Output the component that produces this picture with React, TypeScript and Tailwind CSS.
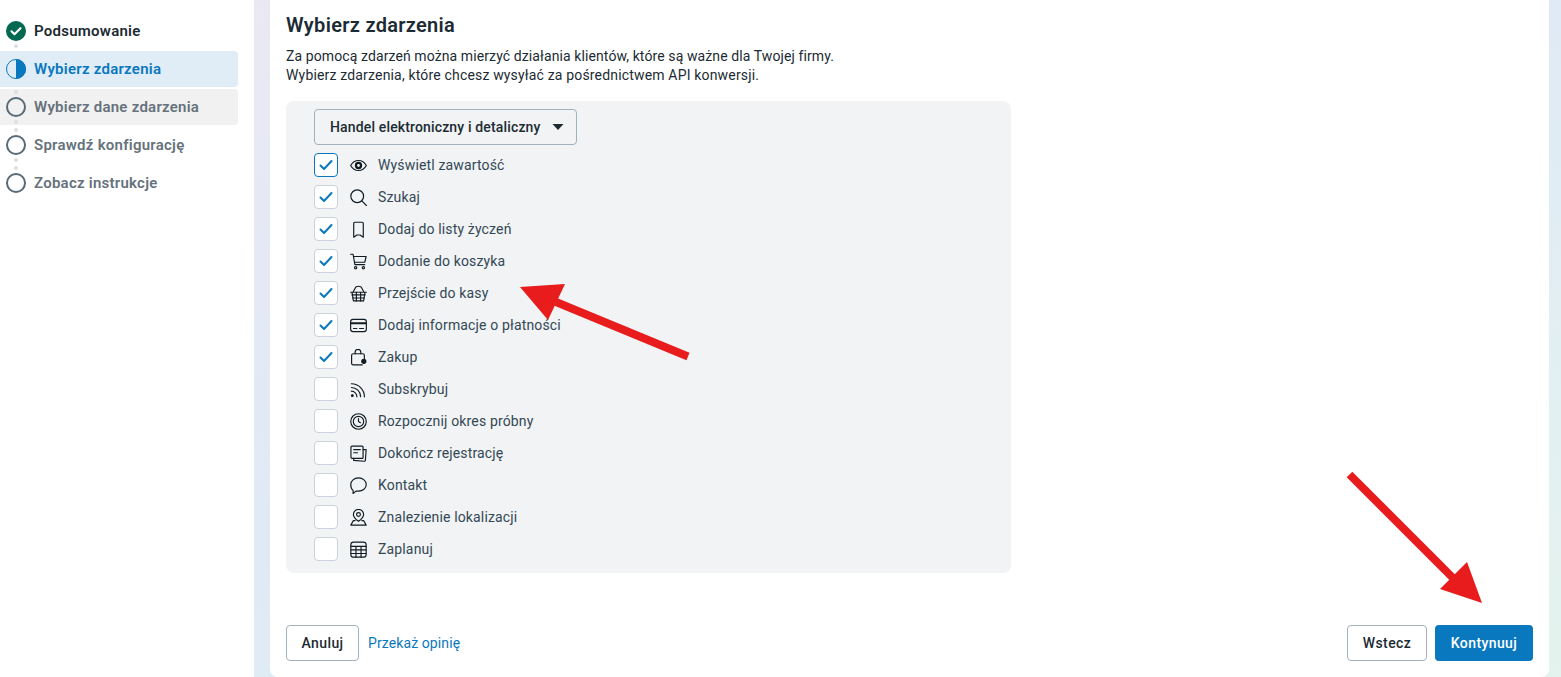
import type { ReactNode } from "react";

const font = { fontFamily: '"Roboto", "Liberation Sans", sans-serif' };

function Ic({ children }: { children: ReactNode }) {
  return (
    <svg viewBox="0 0 16 16" width="17" height="17" className="shrink-0" fill="none" stroke="#111b21" strokeWidth="1.1" strokeLinecap="round" strokeLinejoin="round">
      {children}
    </svg>
  );
}

const icons: Record<string, ReactNode> = {
  eye: (
    <Ic>
      <path d="M.6 8C2.400 4.800 5 3.300 8 3.300s5.600 1.500 7.400 4.700c-1.800 3.200-4.400 4.700-7.400 4.700S2.400 11.200.6 8Z" />
      <circle cx="8" cy="8" r="2.900" fill="#111b21" />
      <circle cx="8" cy="8" r="1.300" fill="#f1f3f5" stroke="none" />
    </Ic>
  ),
  search: (
    <Ic>
      <circle cx="6.800" cy="6.800" r="6" />
      <path d="m11.100 11.100 4.400 4.400" />
    </Ic>
  ),
  bookmark: (
    <Ic>
      <path d="M3.500 2.200a1 1 0 0 1 1-1h7a1 1 0 0 1 1 1v13L9.500 13.200h-3L3.500 15.200z" />
    </Ic>
  ),
  cart: (
    <Ic>
      <path d="M.6 1.200h2.300l1.700 9.800h9.200" />
      <path d="M3.300 3.300h11.900l-1.300 5.400H4.200" />
      <circle cx="5.300" cy="13.900" r="1.100" />
      <circle cx="12.600" cy="13.900" r="1.100" />
    </Ic>
  ),
  basket: (
    <Ic>
      <path d="M.6 6.800h14.800M1.900 6.800l1.300 8.200h9.600l1.300-8.200M2.800 6.800l2.700-4.900Q8 .5 10.500 1.900l2.700 4.900" />
      <path d="M1.800 9.300h12.400M2.500 12.200h11M6 6.800V15M10 6.800V15" />
    </Ic>
  ),
  card: (
    <Ic>
      <rect x=".6" y="2.300" width="14.800" height="11.400" rx="2.200" />
      <path d="M.6 5.900h14.800" strokeWidth="2" />
      <path d="M3.300 10.800h3.200M9 10.800h3.800" />
    </Ic>
  ),
  bag: (
    <Ic>
      <path d="M13.500 9V6a1.500 1.500 0 0 0-1.500-1.500H3A1.500 1.500 0 0 0 1.500 6v7.500A1.500 1.500 0 0 0 3 15h8.500" />
      <path d="M4.800 4.500V3a2.700 2.700 0 0 1 5.400 0v1.500" />
      <circle cx="13" cy="11.600" r="1.900" fill="#111b21" />
    </Ic>
  ),
  rss: (
    <Ic>
      <circle cx="2.200" cy="13.800" r=".8" fill="#111b21" />
      <path d="M1.300 9.600a5.200 5.200 0 0 1 5.200 5.200M1.300 6.100a8.700 8.700 0 0 1 8.700 8.700M1.300 2.600a12.300 12.300 0 0 1 12.300 12.300" />
    </Ic>
  ),
  clock: (
    <Ic>
      <circle cx="8" cy="8" r="7.300" />
      <circle cx="8" cy="8" r="4.900" />
      <path d="M8 5.300V8l1.800 1.100" />
    </Ic>
  ),
  form: (
    <Ic>
      <path d="M12.300 12V2a1 1 0 0 0-1-1H1.900a1 1 0 0 0-1 1v9.600a1 1 0 0 0 1 1h10" />
      <path d="M3.500 4.300h6.200M3.500 7.300h3.600" />
      <path d="M12.300 4.300h2.900l-.7 10a1.100 1.100 0 0 1-1.300 1L3.500 14.500v-1.900" />
    </Ic>
  ),
  chat: (
    <Ic>
      <path d="M8 .9c4.100 0 7.300 2.700 7.300 6.200s-3.200 6.200-7.300 6.200H5.600l-2.700 2.200v-2.900C1.500 11.600.7 9.500.7 7.100.7 3.600 3.900.9 8 .9Z" />
    </Ic>
  ),
  pin: (
    <Ic>
      <path d="M8 11.600C5.300 9.700 3.200 7.500 3.200 5.200a4.800 4.800 0 0 1 9.600 0c0 2.300-2.100 4.500-4.800 6.400Z" />
      <circle cx="8" cy="5.200" r="1.800" />
      <path d="M4.800 10.900H3.200L.8 15.200h14.400l-2.400-4.300h-1.600" />
    </Ic>
  ),
  table: (
    <Ic>
      <rect x=".8" y="1" width="14.400" height="14.200" rx="2.600" />
      <path d="M.8 5h14.400M.8 8.400h14.400M.8 11.800h14.400M5.600 5v10.200M10.400 5v10.200" />
    </Ic>
  ),
};

const events = [
  { label: "Wyświetl zawartość", icon: "eye", on: true, focus: true },
  { label: "Szukaj", icon: "search", on: true },
  { label: "Dodaj do listy życzeń", icon: "bookmark", on: true },
  { label: "Dodanie do koszyka", icon: "cart", on: true },
  { label: "Przejście do kasy", icon: "basket", on: true },
  { label: "Dodaj informacje o płatności", icon: "card", on: true },
  { label: "Zakup", icon: "bag", on: true },
  { label: "Subskrybuj", icon: "rss" },
  { label: "Rozpocznij okres próbny", icon: "clock" },
  { label: "Dokończ rejestrację", icon: "form" },
  { label: "Kontakt", icon: "chat" },
  { label: "Znalezienie lokalizacji", icon: "pin" },
  { label: "Zaplanuj", icon: "table" },
];

function StepIcon({ state }: { state: "done" | "half" | "todo" }) {
  if (state === "done") {
    return (
      <svg width="20" height="20" viewBox="0 0 20 20">
        <circle cx="10" cy="10" r="10" fill="#00694f" />
        <path d="m5.500 10.300 3 2.900 6-6" fill="none" stroke="#fff" strokeWidth="2.200" strokeLinecap="round" strokeLinejoin="round" />
      </svg>
    );
  }
  if (state === "half") {
    return (
      <svg width="20" height="20" viewBox="0 0 20 20">
        <circle cx="10" cy="10" r="9.500" fill="none" stroke="#0a78be" />
        <path d="M10 0a10 10 0 0 1 0 20z" fill="#0a78be" />
      </svg>
    );
  }
  return (
    <svg width="20" height="20" viewBox="0 0 20 20">
      <circle cx="10" cy="10" r="9" fill="none" stroke="#566a78" strokeWidth="2" />
    </svg>
  );
}

function Step({ label, state, rowClass = "", textClass }: { label: string; state: "done" | "half" | "todo"; rowClass?: string; textClass: string }) {
  return (
    <div className={`relative flex h-9 items-center gap-2 rounded-r-[4px] pl-1.5 ${rowClass}`}>
      <StepIcon state={state} />
      <span className={`text-[15px] font-semibold tracking-[0.25px] ${textClass}`}>{label}</span>
    </div>
  );
}

// Two dots per gap; the active row sits above them, the grey one below.
function Dots() {
  return (
    <div className="relative z-10 flex h-0.5 items-center">
      <div className="ml-[14px] flex h-0.5 flex-col items-center justify-center gap-1">
        <span className="h-1 w-1 shrink-0 rounded-full bg-[#dcdfe2]" />
        <span className="h-1 w-1 shrink-0 rounded-full bg-[#dcdfe2]" />
      </div>
    </div>
  );
}

function Button({ children, className = "" }: { children: ReactNode; className?: string }) {
  return (
    <button className={`flex h-9 items-center justify-center rounded-[4px] border border-[#a3b1bd] bg-white text-[14px] font-medium tracking-[0.4px] text-[#1c2b33] ${className}`}>
      {children}
    </button>
  );
}

export default function App() {
  return (
    <div style={font} className="relative flex h-[677px] w-[1561px] overflow-hidden bg-linear-to-br from-[#ece8f3] via-[#dfeaf6] to-[#e5f3ee] text-[14px] text-[#1c2b33]">
      {/* Steps */}
      <aside className="w-[254px] shrink-0 bg-white pt-[13px]">
        <div className="w-[238px]">
          <Step label="Podsumowanie" state="done" textClass="text-[#1c2b33]" />
          <Dots />
          <Step label="Wybierz zdarzenia" state="half" rowClass="z-20 bg-[#e0ecf6]" textClass="text-[#0a78be]" />
          <Dots />
          <Step label="Wybierz dane zdarzenia" state="todo" rowClass="bg-[#f1f1f1]" textClass="text-[#66727c]" />
          <Dots />
          <Step label="Sprawdź konfigurację" state="todo" textClass="text-[#66727c]" />
          <Dots />
          <Step label="Zobacz instrukcje" state="todo" textClass="text-[#66727c]" />
        </div>
      </aside>

      {/* Card */}
      <main className="ml-4 flex w-[1279px] shrink-0 flex-col rounded-b-lg bg-white pb-4 pl-4 pr-4">
        <h1 className="mt-[12px] text-[20px] leading-[26px] font-semibold tracking-[0.3px]">Wybierz zdarzenia</h1>
        <p className="mt-[9px] text-[14px] leading-[19px] tracking-[0.1px]">
          Za pomocą zdarzeń można mierzyć działania klientów, które są ważne dla Twojej firmy.
          <br />
          <span className="tracking-[0.17px]">Wybierz zdarzenia, które chcesz wysyłać za pośrednictwem API konwersji.</span>
        </p>

        <section className="mt-[16px] h-[472px] w-[725px] rounded-lg bg-[#f1f3f5] pl-7 pt-2">
          <button className="flex h-9 w-[263px] items-center justify-between rounded-[4px] border border-[#a3b1bd] pl-[15px] pr-3 text-[14px] font-medium tracking-[0.15px]">
            Handel elektroniczny i detaliczny
            <svg width="12" height="8" viewBox="0 0 12 8" fill="#1c2b33">
              <path d="M.5 1h11L6 7z" />
            </svg>
          </button>
          <ul className="mt-1">
            {events.map((e) => (
              <li key={e.label} className="flex h-8 items-center">
                <span
                  className={`flex h-6 w-6 items-center justify-center rounded-[4px] border bg-white ${
                    e.focus ? "border-[#0a78be]" : "border-[#cbd2d9]"
                  }`}
                >
                  {e.on && (
                    <svg width="14" height="12" viewBox="0 0 14 12" fill="none" stroke="#0a78be" strokeWidth="2" strokeLinecap="round" strokeLinejoin="round">
                      <path d="m1.500 6.500 3.500 3.500 7.500-8" />
                    </svg>
                  )}
                </span>
                <span className="ml-3 flex w-4 justify-center">{icons[e.icon]}</span>
                <span className="ml-3 text-[14px] tracking-[0.15px] text-[#344854]">{e.label}</span>
              </li>
            ))}
          </ul>
        </section>

        <footer className="mt-auto flex items-center">
          <Button className="w-[73px]">Anuluj</Button>
          <a className="ml-[9px] text-[14px] tracking-[0.1px] text-[#0a78be]">Przekaż opinię</a>
          <Button className="ml-auto w-20">Wstecz</Button>
          <button className="ml-2 h-9 w-[98px] rounded-[4px] bg-[#0a78be] text-[14px] font-medium tracking-[0.4px] text-white">Kontynuuj</button>
        </footer>
      </main>

      {/* Red annotation arrows drawn over the screenshot */}
      <svg className="pointer-events-none absolute left-0 top-0" width="1561" height="677" viewBox="0 0 1561 677">
        <path d="M688 356.500 556 302" stroke="#e81c1c" strokeWidth="8" />
        <path d="M520 287 565 284 548 320Z" fill="#e81c1c" />
        <path d="M1349.500 474.500 1456 581" stroke="#e81c1c" strokeWidth="8" />
        <path d="M1467 562 1482 603 1440 589Z" fill="#e81c1c" />
      </svg>
    </div>
  );
}
